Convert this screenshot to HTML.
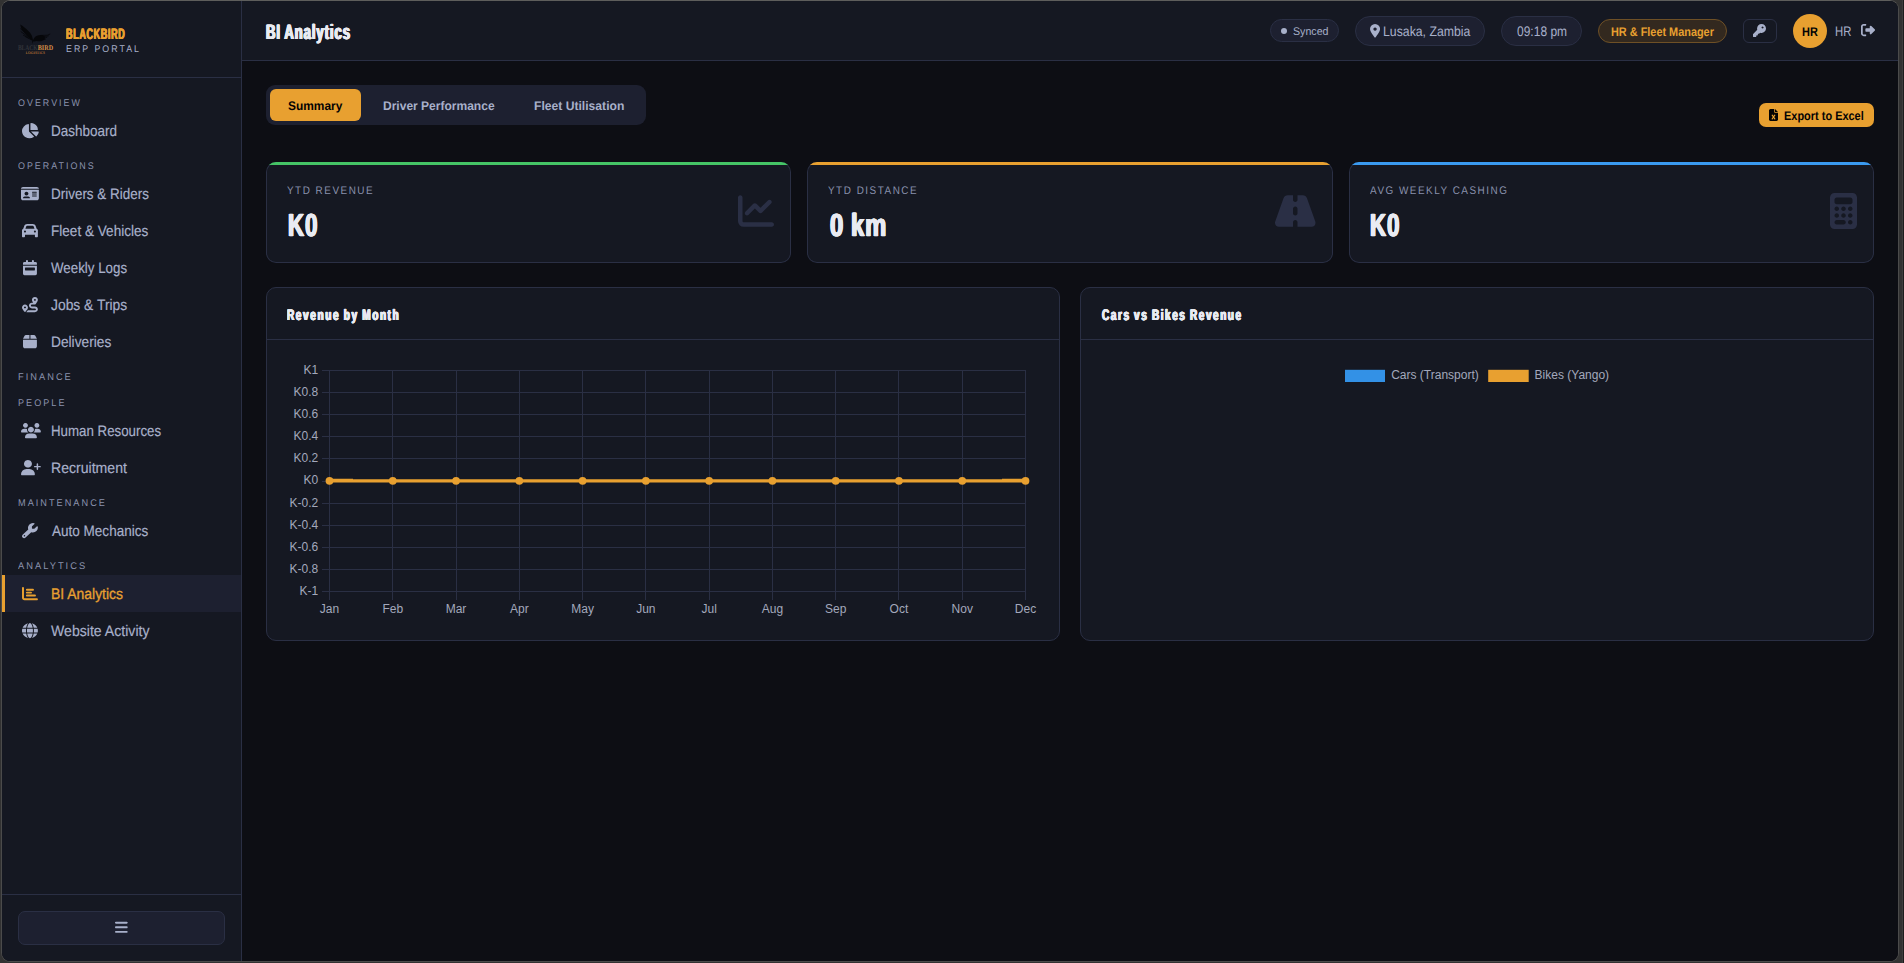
<!DOCTYPE html>
<html lang="en"><head><meta charset="utf-8"><title>Blackbird ERP Portal - BI Analytics</title>
<style>
*{margin:0;padding:0;box-sizing:border-box}
html,body{width:1904px;height:963px;overflow:hidden;background:#323232}
body{position:relative;font-family:"Liberation Sans", sans-serif;-webkit-font-smoothing:antialiased}
#edge{position:absolute;left:1902px;top:0;width:2px;height:963px;background:linear-gradient(90deg,#3d3d3d 50%,#1c1c1c 50%)}
#win{position:absolute;left:1px;top:0;width:1898px;height:962px;border:1px solid #4b4b4b;border-top-color:#5e5e5c;border-radius:9px;overflow:hidden;background:#0d0e14}
#win>*{position:absolute}
.sidebar{left:0;top:0;width:240px;height:960px;background:#151822;border-right:1px solid #2a2f44}
.brand{position:absolute;left:0;top:0;width:239px;height:77px;border-bottom:1px solid #2a2f44}
.topbar{left:240px;top:0;width:1656px;height:60px;background:#151822;border-bottom:1px solid #2a2f44}
main{left:240px;top:60px;width:1656px;height:900px;background:#0d0e14}
.sidebar *,.topbar *,main *{position:absolute}
.t{white-space:nowrap;line-height:1;transform-origin:0 0;display:block;text-rendering:geometricPrecision}
.cond{word-spacing:-1.2px}
.ic{display:block;overflow:visible}
.navact{background:#1d2030;border-left:3px solid #e8a030}
.sidefoot{height:1px;background:#2a2f44}
.collapse{background:#1d2030;border:1px solid #2a2f44;border-radius:7px}
.pill{background:#1d2030;border:1px solid #2a2f44;border-radius:16px}
.pill.role{background:#33291f;border-color:#6e5026}
.keybtn{border:1px solid #2a2f44;border-radius:6px}
.dot{width:6.6px;height:6.6px;border-radius:50%;background:#a8b0ca}
.avatar{width:34px;height:34px;border-radius:50%;background:#e8a030}
.tabs{background:#1d2030;border-radius:9px}
.tabon{background:#e8a030;border-radius:6px}
.export{background:#e8a030;border-radius:7px}
.kpi{background:#2a2f44;border-radius:10px;overflow:hidden}
.kpi>b{left:1px;top:1px;right:1px;bottom:1px;background:#151822;border-radius:9px}
.kpi>i{left:0;top:0;width:100%;height:3px}
.panel{background:#151822;border:1px solid #2a2f44;border-radius:10px}
.phead{left:0;top:0;width:100%;height:52px;border-bottom:1px solid #2a2f44}
.chart{display:block;overflow:visible}
</style></head>
<body>
<div id="edge"></div>
<div id="win">
<aside class="sidebar"><div class="brand"><svg class="logo" style="position:absolute;left:12px;top:19px" width="44" height="38" viewBox="14 20 44 38"><g fill="#06070a"><path d="M20.2 24.5 L22.3 25.8 L26.3 29.1 L30.1 32.7 L31.9 35.8 L32.9 39.4 L32.7 41.5 L30.9 39.6 L28.3 36.9 L25.3 33.8 L22.5 30.4 L21 27.4 Z"/><path d="M32.5 41.5 C33.4 38.8 34.8 36.9 36.4 36 C38.6 34.9 41.4 34.9 43.2 35.3 L45 37 L44.4 39.4 C42.6 41 39.4 41.7 36.8 41.1 L34.2 41.5 Z"/><path d="M32.1 41 L32.9 41 L32.6 43.5 L32.1 43.5 Z"/></g><g fill="none" stroke="#06070a" stroke-linecap="round"><path d="M27.4 36.4 L21 31.7 M29.2 38.2 L23.4 35.3 M30.8 39.5 L25.6 36.8" stroke-width="1" opacity=".85"/><path d="M25 32.6 L20.9 28.6" stroke-width="1.1" opacity=".8"/><path d="M41 35.4 L47.4 35.2 L49.9 34.1 M43.5 36.6 L48.4 35.9 M44 38.2 L46.8 37.4 M43.2 39.8 L45.4 39.2" stroke-width=".9" opacity=".85"/></g><g font-family='"Liberation Serif", serif' font-weight="700" text-rendering="geometricPrecision"><text x="17.9" y="50" font-size="7.1" fill="#33353a" textLength="19.8" lengthAdjust="spacingAndGlyphs">BLACK</text><text x="37.7" y="50" font-size="7.1" fill="#d88f48" textLength="15.4" lengthAdjust="spacingAndGlyphs">BIRD</text><text x="25.8" y="53.9" font-size="4" fill="#a86c34" textLength="19.2" lengthAdjust="spacingAndGlyphs">LOGISTICS</text></g></svg></div>
<svg class="ic" style="left:19.06px;top:121.70px;width:17.89px;height:15.2px;fill:#a8b0ca" viewBox="0 0 576 512" preserveAspectRatio="none"><path d="M304 240V17V240V17Q305 2 320 0Q383 1 433 31Q484 60 513 111Q543 161 544 224Q542 239 527 240H304ZM32 272Q34 179 92 114Q149 48 239 34Q254 34 256 50V288L413 445Q423 457 411 468Q351 511 272 512Q205 511 151 479Q97 447 65 393Q33 339 32 272ZM558 288Q574 290 574 305Q561 391 500 447Q489 456 479 447L320 288H558Z"/></svg>
<svg class="ic" style="left:19.06px;top:184.70px;width:17.89px;height:15.2px;fill:#a8b0ca" viewBox="0 0 576 512" preserveAspectRatio="none"><path d="M0 96H576H0H576Q575 69 557 51Q539 33 512 32H64Q37 33 19 51Q1 69 0 96ZM0 128V416V128V416Q1 443 19 461Q37 479 64 480H512Q539 479 557 461Q575 443 576 416V128H0ZM64 405Q65 383 80 368Q95 353 117 352H235Q257 353 272 368Q287 383 288 405Q287 415 277 416H75Q65 415 64 405ZM176 192Q212 193 231 224Q249 256 231 288Q212 319 176 320Q140 319 121 288Q103 256 121 224Q140 193 176 192ZM352 208Q353 193 368 192H496Q511 193 512 208Q511 223 496 224H368Q353 223 352 208ZM352 272Q353 257 368 256H496Q511 257 512 272Q511 287 496 288H368Q353 287 352 272ZM352 336Q353 321 368 320H496Q511 321 512 336Q511 351 496 352H368Q353 351 352 336Z"/></svg>
<svg class="ic" style="left:20.05px;top:221.70px;width:15.90px;height:15.2px;fill:#a8b0ca" viewBox="0 0 512 512" preserveAspectRatio="none"><path d="M135 117 109 192 135 117 109 192H403L377 117Q369 97 347 96H165Q143 97 135 117ZM40 197 75 96 40 197 75 96Q85 67 110 50Q134 32 165 32H347Q378 32 402 50Q427 67 437 96L472 197Q490 204 501 220Q512 236 512 256V400V448Q512 462 503 471Q494 480 480 480H448Q434 480 425 471Q416 462 416 448V400H96V448Q96 462 87 471Q78 480 64 480H32Q18 480 9 471Q0 462 0 448V400V256Q0 236 11 220Q22 204 40 197ZM128 288Q128 274 119 265Q110 256 96 256Q82 256 73 265Q64 274 64 288Q64 302 73 311Q82 320 96 320Q110 320 119 311Q128 302 128 288ZM416 320Q430 320 439 311Q448 302 448 288Q448 274 439 265Q430 256 416 256Q402 256 393 265Q384 274 384 288Q384 302 393 311Q402 320 416 320Z"/></svg>
<svg class="ic" style="left:21.04px;top:258.70px;width:13.91px;height:15.2px;fill:#a8b0ca" viewBox="0 0 448 512" preserveAspectRatio="none"><path d="M128 0Q142 0 151 9Q160 18 160 32V64H288V32Q288 18 297 9Q306 0 320 0Q334 0 343 9Q352 18 352 32V64H400Q420 65 434 78Q447 92 448 112V160H0V112Q1 92 14 78Q28 65 48 64H96V32Q96 18 105 9Q114 0 128 0ZM0 192H448H0H448V464Q447 484 434 498Q420 511 400 512H48Q28 511 14 498Q1 484 0 464V192ZM80 256Q65 257 64 272V336Q65 351 80 352H368Q383 351 384 336V272Q383 257 368 256H80Z"/></svg>
<svg class="ic" style="left:20.05px;top:295.70px;width:15.90px;height:15.2px;fill:#a8b0ca" viewBox="0 0 512 512" preserveAspectRatio="none"><path d="M512 96Q511 122 496 152Q480 182 461 209Q441 235 427 251Q421 258 413 256H320Q306 256 297 265Q288 274 288 288Q288 302 297 311Q306 320 320 320H416Q457 321 484 348Q511 375 512 416Q511 457 484 484Q457 511 416 512H140Q153 497 170 475Q179 463 189 448H416Q430 448 439 439Q448 430 448 416Q448 402 439 393Q430 384 416 384H320Q279 383 252 356Q225 329 224 288Q225 247 252 220Q279 193 320 192H360Q344 168 332 143Q321 118 320 96Q321 55 348 28Q375 1 416 0Q457 1 484 28Q511 55 512 96ZM117 489Q111 496 107 500L105 502Q95 509 85 500Q72 486 52 461Q32 436 16 407Q1 378 0 352Q1 311 28 284Q55 257 96 256Q137 257 164 284Q191 311 192 352Q191 375 179 401Q166 426 149 450Q132 472 118 488L117 489ZM128 352Q128 338 119 329Q110 320 96 320Q82 320 73 329Q64 338 64 352Q64 366 73 375Q82 384 96 384Q110 384 119 375Q128 366 128 352ZM416 128Q430 128 439 119Q448 110 448 96Q448 82 439 73Q430 64 416 64Q402 64 393 73Q384 82 384 96Q384 110 393 119Q402 128 416 128Z"/></svg>
<svg class="ic" style="left:21.04px;top:332.70px;width:13.91px;height:15.2px;fill:#a8b0ca" viewBox="0 0 448 512" preserveAspectRatio="none"><path d="M51 59 0 160 51 59 0 160H208V32H94Q65 33 51 59ZM240 160H448H240H448L397 59Q383 33 354 32H240V160ZM448 192H0H448H0V416Q1 443 19 461Q37 479 64 480H384Q411 479 429 461Q447 443 448 416V192Z"/></svg>
<svg class="ic" style="left:18.66px;top:421.70px;width:19.88px;height:15.2px;fill:#a8b0ca" viewBox="0 0 640 512" preserveAspectRatio="none"><path d="M144 0Q189 1 213 40Q235 80 213 120Q189 159 144 160Q99 159 75 120Q53 80 75 40Q99 1 144 0ZM512 0Q557 1 581 40Q603 80 581 120Q557 159 512 160Q467 159 443 120Q421 80 443 40Q467 1 512 0ZM0 299Q1 253 31 223Q61 193 107 192H149Q173 192 194 202Q192 213 192 224Q194 283 235 320Q235 320 235 320Q235 320 235 320H21Q2 318 0 299ZM405 320Q405 320 405 320Q405 320 405 320Q446 283 448 224Q448 213 446 202Q467 192 491 192H533Q579 193 609 223Q639 253 640 299Q638 318 619 320H405ZM224 224Q224 198 237 176Q250 154 272 141Q295 128 320 128Q345 128 368 141Q390 154 403 176Q416 198 416 224Q416 250 403 272Q390 294 368 307Q345 320 320 320Q295 320 272 307Q250 294 237 272Q224 250 224 224ZM128 485Q129 429 167 391Q205 353 261 352H379Q435 353 473 391Q511 429 512 485Q510 510 485 512H155Q130 510 128 485Z"/></svg>
<svg class="ic" style="left:18.66px;top:458.70px;width:19.88px;height:15.2px;fill:#a8b0ca" viewBox="0 0 640 512" preserveAspectRatio="none"><path d="M96 128Q96 93 113 64Q130 35 160 17Q190 0 224 0Q258 0 288 17Q318 35 335 64Q352 93 352 128Q352 163 335 192Q318 221 288 239Q258 256 224 256Q190 256 160 239Q130 221 113 192Q96 163 96 128ZM0 482Q2 407 52 356Q103 306 178 304H270Q345 306 396 356Q446 407 448 482Q448 495 439 503Q431 512 418 512H30Q17 512 9 503Q0 495 0 482ZM504 312V248V312V248H440Q418 246 416 224Q418 202 440 200H504V136Q506 114 528 112Q550 114 552 136V200H616Q638 202 640 224Q638 246 616 248H552V312Q550 334 528 336Q506 334 504 312Z"/></svg>
<svg class="ic" style="left:20.05px;top:521.70px;width:15.90px;height:15.2px;fill:#a8b0ca" viewBox="0 0 512 512" preserveAspectRatio="none"><path d="M352 320Q420 318 465 273Q510 228 512 160Q512 137 506 116Q503 108 495 106Q488 105 482 111L405 187Q400 192 393 192H336Q321 191 320 176V119Q320 112 325 107L402 30Q407 24 406 17Q404 9 396 6Q375 0 352 0Q284 2 239 47Q194 92 192 160Q192 189 202 215L20 396Q0 416 0 444Q1 473 20 492Q39 511 68 512Q96 512 116 492L298 311Q323 320 352 320ZM80 408Q102 410 104 432Q102 454 80 456Q58 454 56 432Q58 410 80 408Z"/></svg>
<div class="navact" style="left:0;top:574.0px;width:239px;height:37px"></div>
<svg class="ic" style="left:20.05px;top:584.70px;width:15.90px;height:15.2px;fill:#e8a030" viewBox="0 0 512 512" preserveAspectRatio="none"><path d="M32 32Q46 32 55 41Q64 50 64 64V400Q65 415 80 416H480Q494 416 503 425Q512 434 512 448Q512 462 503 471Q494 480 480 480H80Q46 479 23 457Q1 434 0 400V64Q0 50 9 41Q18 32 32 32ZM128 128Q128 114 137 105Q146 96 160 96H352Q366 96 375 105Q384 114 384 128Q384 142 375 151Q366 160 352 160H160Q146 160 137 151Q128 142 128 128ZM160 192H288H160H288Q302 192 311 201Q320 210 320 224Q320 238 311 247Q302 256 288 256H160Q146 256 137 247Q128 238 128 224Q128 210 137 201Q146 192 160 192ZM160 288H416H160H416Q430 288 439 297Q448 306 448 320Q448 334 439 343Q430 352 416 352H160Q146 352 137 343Q128 334 128 320Q128 306 137 297Q146 288 160 288Z"/></svg>
<svg class="ic" style="left:20.05px;top:621.70px;width:15.90px;height:15.2px;fill:#a8b0ca" viewBox="0 0 512 512" preserveAspectRatio="none"><path d="M352 256Q352 289 349 320H163Q160 289 160 256Q160 223 163 192H349Q352 223 352 256ZM381 192H504H381H504Q512 223 512 256Q512 289 504 320H381Q384 289 384 256Q384 223 381 192ZM493 160H377H493H377Q361 62 321 8Q381 25 426 64Q470 104 493 160ZM344 160H168H344H168Q177 105 195 65Q211 30 228 14Q245 -1 256 0Q267 -1 284 14Q301 30 317 65Q335 105 344 160ZM135 160H19H135H19Q42 104 86 64Q131 25 191 8Q151 62 135 160ZM8 192H131H8H131Q128 223 128 256Q128 289 131 320H8Q0 289 0 256Q0 223 8 192ZM195 447Q177 407 168 352H344Q335 407 317 447Q301 482 284 498Q267 513 256 512Q245 513 228 498Q211 482 195 447ZM135 352Q151 450 191 504Q131 487 86 448Q42 408 19 352H135ZM493 352Q470 408 426 448Q381 487 322 504Q361 450 377 352H493Z"/></svg>
<div class="sidefoot" style="left:0;top:893px;width:239px"></div>
<div class="collapse" style="left:16px;top:910px;width:207px;height:34px"></div>
<svg class="ic" style="left:113.46px;top:919.35px;width:12.69px;height:14.5px;fill:#a8b0ca" viewBox="0 0 448 512"><path d="M0 96Q0 82 9 73Q18 64 32 64H416Q430 64 439 73Q448 82 448 96Q448 110 439 119Q430 128 416 128H32Q18 128 9 119Q0 110 0 96ZM0 256Q0 242 9 233Q18 224 32 224H416Q430 224 439 233Q448 242 448 256Q448 270 439 279Q430 288 416 288H32Q18 288 9 279Q0 270 0 256ZM448 416Q448 430 439 439Q430 448 416 448H32Q18 448 9 439Q0 430 0 416Q0 402 9 393Q18 384 32 384H416Q430 384 439 393Q448 402 448 416Z"/></svg>
<span class="t cond" style="left:64.40px;top:26.00px;font-size:15.28px;font-weight:700;color:#e8a030;transform:scaleX(0.5932);letter-spacing:1.03px;-webkit-text-stroke:0.2px #e8a030;text-shadow:0.67px 0 0 #e8a030,-0.67px 0 0 #e8a030">BLACKBIRD</span>
<span class="t " style="left:64.13px;top:44.00px;font-size:9.69px;font-weight:400;color:#a8b0ca;transform:scaleX(0.9103);letter-spacing:2.22px">ERP PORTAL</span>
<span class="t lbl" style="left:16.13px;top:98.00px;font-size:9.69px;font-weight:400;color:#8a92ad;transform:scaleX(0.9184);letter-spacing:2.21px">OVERVIEW</span>
<span class="t lbl" style="left:16.13px;top:161.00px;font-size:9.69px;font-weight:400;color:#8a92ad;transform:scaleX(0.9204);letter-spacing:2.17px">OPERATIONS</span>
<span class="t lbl" style="left:15.98px;top:372.00px;font-size:9.69px;font-weight:400;color:#8a92ad;transform:scaleX(0.9550);letter-spacing:2.13px">FINANCE</span>
<span class="t lbl" style="left:16.00px;top:398.00px;font-size:9.69px;font-weight:400;color:#8a92ad;transform:scaleX(0.9374);letter-spacing:2.17px">PEOPLE</span>
<span class="t lbl" style="left:15.98px;top:498.00px;font-size:9.69px;font-weight:400;color:#8a92ad;transform:scaleX(0.9463);letter-spacing:2.14px">MAINTENANCE</span>
<span class="t lbl" style="left:16.07px;top:561.00px;font-size:9.69px;font-weight:400;color:#8a92ad;transform:scaleX(0.9649);letter-spacing:2.07px">ANALYTICS</span>
<span class="t nav" style="left:48.92px;top:123.00px;font-size:15.28px;font-weight:400;color:#a8b0ca;transform:scaleX(0.8837);-webkit-text-stroke:0.18px #a8b0ca">Dashboard</span>
<span class="t nav" style="left:48.94px;top:186.00px;font-size:15.28px;font-weight:400;color:#a8b0ca;transform:scaleX(0.8809);-webkit-text-stroke:0.18px #a8b0ca">Drivers &amp; Riders</span>
<span class="t nav" style="left:48.92px;top:223.00px;font-size:15.28px;font-weight:400;color:#a8b0ca;transform:scaleX(0.8892);-webkit-text-stroke:0.18px #a8b0ca">Fleet &amp; Vehicles</span>
<span class="t nav" style="left:49.29px;top:260.00px;font-size:15.28px;font-weight:400;color:#a8b0ca;transform:scaleX(0.8731);-webkit-text-stroke:0.18px #a8b0ca">Weekly Logs</span>
<span class="t nav" style="left:49.23px;top:297.00px;font-size:15.28px;font-weight:400;color:#a8b0ca;transform:scaleX(0.9075);-webkit-text-stroke:0.18px #a8b0ca">Jobs &amp; Trips</span>
<span class="t nav" style="left:48.92px;top:334.00px;font-size:15.28px;font-weight:400;color:#a8b0ca;transform:scaleX(0.8997);-webkit-text-stroke:0.18px #a8b0ca">Deliveries</span>
<span class="t nav" style="left:48.94px;top:423.00px;font-size:15.28px;font-weight:400;color:#a8b0ca;transform:scaleX(0.8708);-webkit-text-stroke:0.18px #a8b0ca">Human Resources</span>
<span class="t nav" style="left:48.89px;top:460.00px;font-size:15.28px;font-weight:400;color:#a8b0ca;transform:scaleX(0.9224);-webkit-text-stroke:0.18px #a8b0ca">Recruitment</span>
<span class="t nav" style="left:49.86px;top:523.00px;font-size:15.28px;font-weight:400;color:#a8b0ca;transform:scaleX(0.8860);-webkit-text-stroke:0.18px #a8b0ca">Auto Mechanics</span>
<span class="t nav" style="left:49.00px;top:586.00px;font-size:15.28px;font-weight:400;color:#e8a030;transform:scaleX(0.9124);-webkit-text-stroke:0.32px #e8a030">BI Analytics</span>
<span class="t nav" style="left:49.26px;top:623.00px;font-size:15.28px;font-weight:400;color:#a8b0ca;transform:scaleX(0.9242);-webkit-text-stroke:0.18px #a8b0ca">Website Activity</span>
</aside>
<header class="topbar">
<div class="pill" style="left:1028px;top:18px;width:69px;height:23px"></div>
<div class="dot" style="left:1038.7px;top:26.6px"></div>
<div class="pill" style="left:1113px;top:15px;width:130px;height:30px"></div>
<svg class="ic" style="left:1128.04px;top:23.25px;width:10.12px;height:13.5px;fill:#a8b0ca" viewBox="0 0 384 512"><path d="M216 499Q243 466 282 410Q321 355 352 296Q382 237 384 192Q382 110 328 56Q274 2 192 0Q110 2 56 56Q2 110 0 192Q2 237 32 296Q63 355 102 410Q141 466 168 499Q178 511 192 511Q206 511 216 499ZM192 128Q228 129 247 160Q265 192 247 224Q228 255 192 256Q156 255 137 224Q119 192 137 160Q156 129 192 128Z"/></svg>
<div class="pill" style="left:1259px;top:15px;width:81px;height:30px"></div>
<div class="pill role" style="left:1356px;top:18px;width:129px;height:24px"></div>
<div class="keybtn" style="left:1501px;top:18px;width:34px;height:24px"></div>
<svg class="ic" style="left:1511.10px;top:23.20px;width:13.00px;height:13px;fill:#a8b0ca" viewBox="0 0 512 512"><path d="M336 352Q411 350 460 300Q510 251 512 176Q510 101 460 52Q411 2 336 0Q261 2 212 52Q162 101 160 176Q160 204 168 230L7 391Q0 398 0 408V488Q2 510 24 512H104Q126 510 128 488V448H168Q190 446 192 424V384H232Q242 384 249 377L282 344Q308 352 336 352ZM376 96Q399 97 411 116Q421 136 411 156Q399 175 376 176Q353 175 341 156Q331 136 341 116Q353 97 376 96Z"/></svg>
<div class="avatar" style="left:1551px;top:13px"></div>
<svg class="ic" style="left:1618.50px;top:22.40px;width:14.00px;height:14px;fill:#a8b0ca" viewBox="0 0 512 512"><path d="M378 106 501 229 378 106 501 229Q512 240 512 256Q512 272 501 283L378 406Q368 416 354 416Q340 416 330 406Q320 396 320 382V320H192Q178 320 169 311Q160 302 160 288V224Q160 210 169 201Q178 192 192 192H320V130Q320 116 330 106Q340 96 354 96Q368 96 378 106ZM160 96H96H160H96Q82 96 73 105Q64 114 64 128V384Q64 398 73 407Q82 416 96 416H160Q174 416 183 425Q192 434 192 448Q192 462 183 471Q174 480 160 480H96Q55 479 28 452Q1 425 0 384V128Q1 87 28 60Q55 33 96 32H160Q174 32 183 41Q192 50 192 64Q192 78 183 87Q174 96 160 96Z"/></svg>
<span class="t cond" style="left:24.43px;top:22.00px;font-size:20.87px;font-weight:700;color:#e9ebf2;transform:scaleX(0.6262);letter-spacing:1.52px;-webkit-text-stroke:0.2px #e9ebf2;text-shadow:0.52px 0 0 #e9ebf2,-0.52px 0 0 #e9ebf2,1.04px 0 0 #e9ebf2,-1.04px 0 0 #e9ebf2">BI Analytics</span>
<span class="t " style="left:1051.28px;top:26.00px;font-size:11.09px;font-weight:400;color:#a8b0ca;transform:scaleX(0.9611)">Synced</span>
<span class="t " style="left:1140.70px;top:24.00px;font-size:13.88px;font-weight:400;color:#a8b0ca;transform:scaleX(0.8856)">Lusaka, Zambia</span>
<span class="t " style="left:1274.84px;top:24.00px;font-size:13.88px;font-weight:400;color:#a8b0ca;transform:scaleX(0.8657)">09:18 pm</span>
<span class="t " style="left:1368.89px;top:25.00px;font-size:12.49px;font-weight:700;color:#e8a030;transform:scaleX(0.8724)">HR &amp; Fleet Manager</span>
<span class="t " style="left:1559.79px;top:25.00px;font-size:12.49px;font-weight:700;color:#030304;transform:scaleX(0.8773)">HR</span>
<span class="t " style="left:1592.87px;top:24.00px;font-size:13.88px;font-weight:400;color:#a8b0ca;transform:scaleX(0.8155)">HR</span>
</header>
<main>
<div class="tabs" style="left:24.00px;top:24.00px;width:380.00px;height:40.00px"></div>
<div class="tabon" style="left:28.00px;top:28.00px;width:91.00px;height:32.00px"></div>
<div class="export" style="left:1517.00px;top:42.00px;width:115.00px;height:24.00px"></div>
<svg class="ic" style="left:1526.80px;top:47.60px;width:9.00px;height:12px;fill:#030304" viewBox="0 0 384 512"><path d="M64 0Q37 1 19 19Q1 37 0 64V448Q1 475 19 493Q37 511 64 512H320Q347 511 365 493Q383 475 384 448V160H256Q242 160 233 151Q224 142 224 128V0H64ZM256 0V128V0V128H384L256 0ZM156 250 192 302 156 250 192 302 228 250Q243 233 262 244Q278 259 268 278L221 344L268 410Q279 429 262 444Q243 455 228 438L192 386L156 438Q141 455 122 444Q106 429 116 410L163 344L116 278Q105 259 122 244Q141 233 156 250Z"/></svg>
<div class="kpi" style="left:24.00px;top:101.00px;width:525.33px;height:101.00px"><b></b><i style="background:#45c466"></i></div>
<svg class="ic" style="left:496.33px;top:132.30px;width:36.00px;height:36px;fill:#2a2f45" viewBox="0 0 512 512"><path d="M64 64Q64 50 55 41Q46 32 32 32Q18 32 9 41Q0 50 0 64V400Q1 434 23 457Q46 479 80 480H480Q494 480 503 471Q512 462 512 448Q512 434 503 425Q494 416 480 416H80Q65 415 64 400V64ZM471 151Q480 141 480 128Q480 115 471 105Q461 96 448 96Q435 96 425 105L320 211L263 153Q253 144 240 144Q227 144 217 153L105 265Q96 275 96 288Q96 301 105 311Q115 320 128 320Q141 320 151 311L240 221L297 279Q307 288 320 288Q333 288 343 279L471 151Z"/></svg>
<div class="kpi" style="left:565.33px;top:101.00px;width:525.33px;height:101.00px"><b></b><i style="background:#e8a030"></i></div>
<svg class="ic" style="left:1033.17px;top:132.30px;width:40.50px;height:36px;fill:#2a2f45" viewBox="0 0 576 512"><path d="M256 32H181H256H181Q160 32 144 44Q128 55 121 75L3 407Q0 416 0 425Q1 449 16 464Q31 479 55 480H256V416Q256 402 265 393Q274 384 288 384Q302 384 311 393Q320 402 320 416V480H521Q545 479 560 464Q575 449 576 425Q576 416 573 407L455 75Q448 55 432 44Q416 32 395 32H320V96Q320 110 311 119Q302 128 288 128Q274 128 265 119Q256 110 256 96V32ZM320 224V288V224V288Q320 302 311 311Q302 320 288 320Q274 320 265 311Q256 302 256 288V224Q256 210 265 201Q274 192 288 192Q302 192 311 201Q320 210 320 224Z"/></svg>
<div class="kpi" style="left:1106.67px;top:101.00px;width:525.33px;height:101.00px"><b></b><i style="background:#3a9af0"></i></div>
<svg class="ic" style="left:1588.00px;top:132.30px;width:27.00px;height:36px;fill:#2a2f45" viewBox="0 0 384 512"><path d="M64 0Q37 1 19 19Q1 37 0 64V448Q1 475 19 493Q37 511 64 512H320Q347 511 365 493Q383 475 384 448V64Q383 37 365 19Q347 1 320 0H64ZM96 64H288H96H288Q302 64 311 73Q320 82 320 96V128Q320 142 311 151Q302 160 288 160H96Q82 160 73 151Q64 142 64 128V96Q64 82 73 73Q82 64 96 64ZM128 224Q128 238 119 247Q110 256 96 256Q82 256 73 247Q64 238 64 224Q64 210 73 201Q82 192 96 192Q110 192 119 201Q128 210 128 224ZM96 352Q82 352 73 343Q64 334 64 320Q64 306 73 297Q82 288 96 288Q110 288 119 297Q128 306 128 320Q128 334 119 343Q110 352 96 352ZM64 416Q64 402 73 393Q82 384 96 384H192Q206 384 215 393Q224 402 224 416Q224 430 215 439Q206 448 192 448H96Q82 448 73 439Q64 430 64 416ZM192 256Q178 256 169 247Q160 238 160 224Q160 210 169 201Q178 192 192 192Q206 192 215 201Q224 210 224 224Q224 238 215 247Q206 256 192 256ZM224 320Q224 334 215 343Q206 352 192 352Q178 352 169 343Q160 334 160 320Q160 306 169 297Q178 288 192 288Q206 288 215 297Q224 306 224 320ZM288 256Q274 256 265 247Q256 238 256 224Q256 210 265 201Q274 192 288 192Q302 192 311 201Q320 210 320 224Q320 238 311 247Q302 256 288 256ZM320 320Q320 334 311 343Q302 352 288 352Q274 352 265 343Q256 334 256 320Q256 306 265 297Q274 288 288 288Q302 288 311 297Q320 306 320 320ZM288 448Q274 448 265 439Q256 430 256 416Q256 402 265 393Q274 384 288 384Q302 384 311 393Q320 402 320 416Q320 430 311 439Q302 448 288 448Z"/></svg>
<div class="panel" style="left:24.00px;top:226.00px;width:794.00px;height:354.00px"><div class="phead"></div></div>
<div class="panel" style="left:838.00px;top:226.00px;width:794.00px;height:354.00px"><div class="phead"></div></div>
<svg class="chart" style="left:38px;top:291px" width="770" height="280" viewBox="0 0 770 280"><g stroke="#2a2f44" stroke-width="1" shape-rendering="crispEdges"><line x1="42" y1="18.50" x2="745.5" y2="18.50"/><line x1="42" y1="40.60" x2="745.5" y2="40.60"/><line x1="42" y1="62.70" x2="745.5" y2="62.70"/><line x1="42" y1="84.80" x2="745.5" y2="84.80"/><line x1="42" y1="106.90" x2="745.5" y2="106.90"/><line x1="42" y1="129.00" x2="745.5" y2="129.00"/><line x1="42" y1="151.10" x2="745.5" y2="151.10"/><line x1="42" y1="173.20" x2="745.5" y2="173.20"/><line x1="42" y1="195.30" x2="745.5" y2="195.30"/><line x1="42" y1="217.40" x2="745.5" y2="217.40"/><line x1="42" y1="239.50" x2="745.5" y2="239.50"/><line x1="49.50" y1="18.5" x2="49.50" y2="247.5"/><line x1="112.77" y1="18.5" x2="112.77" y2="247.5"/><line x1="176.05" y1="18.5" x2="176.05" y2="247.5"/><line x1="239.32" y1="18.5" x2="239.32" y2="247.5"/><line x1="302.59" y1="18.5" x2="302.59" y2="247.5"/><line x1="365.86" y1="18.5" x2="365.86" y2="247.5"/><line x1="429.14" y1="18.5" x2="429.14" y2="247.5"/><line x1="492.41" y1="18.5" x2="492.41" y2="247.5"/><line x1="555.68" y1="18.5" x2="555.68" y2="247.5"/><line x1="618.95" y1="18.5" x2="618.95" y2="247.5"/><line x1="682.23" y1="18.5" x2="682.23" y2="247.5"/><line x1="745.50" y1="18.5" x2="745.50" y2="247.5"/></g><line x1="49.5" y1="128.80" x2="745.5" y2="128.80" stroke="#e8a030" stroke-width="3.2"/><path d="M49.5 128.35H73M722 128.35H745.5" stroke="#e8a030" stroke-width="3.2" fill="none"/><g fill="#e8a030"><circle cx="49.50" cy="128.80" r="3.9"/><circle cx="112.77" cy="128.80" r="3.9"/><circle cx="176.05" cy="128.80" r="3.9"/><circle cx="239.32" cy="128.80" r="3.9"/><circle cx="302.59" cy="128.80" r="3.9"/><circle cx="365.86" cy="128.80" r="3.9"/><circle cx="429.14" cy="128.80" r="3.9"/><circle cx="492.41" cy="128.80" r="3.9"/><circle cx="555.68" cy="128.80" r="3.9"/><circle cx="618.95" cy="128.80" r="3.9"/><circle cx="682.23" cy="128.80" r="3.9"/><circle cx="745.50" cy="128.80" r="3.9"/></g><g fill="#a3a8bc" font-family='"Liberation Sans", sans-serif' font-size="12"><text x="38.30000000000001" y="22.00" text-anchor="end">K1</text><text x="38.30000000000001" y="44.00" text-anchor="end">K0.8</text><text x="38.30000000000001" y="66.00" text-anchor="end">K0.6</text><text x="38.30000000000001" y="88.00" text-anchor="end">K0.4</text><text x="38.30000000000001" y="110.00" text-anchor="end">K0.2</text><text x="38.30000000000001" y="132.00" text-anchor="end">K0</text><text x="38.30000000000001" y="155.00" text-anchor="end">K-0.2</text><text x="38.30000000000001" y="177.00" text-anchor="end">K-0.4</text><text x="38.30000000000001" y="199.00" text-anchor="end">K-0.6</text><text x="38.30000000000001" y="221.00" text-anchor="end">K-0.8</text><text x="38.30000000000001" y="243.00" text-anchor="end">K-1</text><text x="49.50" y="261" text-anchor="middle">Jan</text><text x="112.77" y="261" text-anchor="middle">Feb</text><text x="176.05" y="261" text-anchor="middle">Mar</text><text x="239.32" y="261" text-anchor="middle">Apr</text><text x="302.59" y="261" text-anchor="middle">May</text><text x="365.86" y="261" text-anchor="middle">Jun</text><text x="429.14" y="261" text-anchor="middle">Jul</text><text x="492.41" y="261" text-anchor="middle">Aug</text><text x="555.68" y="261" text-anchor="middle">Sep</text><text x="618.95" y="261" text-anchor="middle">Oct</text><text x="682.23" y="261" text-anchor="middle">Nov</text><text x="745.50" y="261" text-anchor="middle">Dec</text></g></svg>
<svg class="chart" style="left:1094px;top:299px" width="290" height="30" viewBox="0 0 290 30"><rect x="9" y="9.8" width="40" height="12.2" fill="#3391e6"/><rect x="152.2" y="9.8" width="40.5" height="12.2" fill="#e8a030"/><g fill="#a3a8bc" font-family='"Liberation Sans", sans-serif' font-size="12"><text x="55.2" y="18.9">Cars (Transport)</text><text x="198.6" y="18.9">Bikes (Yango)</text></g></svg>
<span class="t " style="left:46.02px;top:39.00px;font-size:12.49px;font-weight:700;color:#030304;transform:scaleX(0.9554)">Summary</span>
<span class="t " style="left:140.52px;top:39.00px;font-size:12.49px;font-weight:700;color:#a8b0ca;transform:scaleX(0.9629)">Driver Performance</span>
<span class="t " style="left:292.12px;top:39.00px;font-size:12.49px;font-weight:700;color:#a8b0ca;transform:scaleX(0.9719)">Fleet Utilisation</span>
<span class="t " style="left:1541.79px;top:49.00px;font-size:12.49px;font-weight:700;color:#030304;transform:scaleX(0.8776)">Export to Excel</span>
<span class="t lbl" style="left:45.04px;top:125.00px;font-size:11.09px;font-weight:400;color:#8a92ad;transform:scaleX(0.8956);letter-spacing:1.68px">YTD REVENUE</span>
<span class="t cond" style="left:45.68px;top:148.00px;font-size:32.04px;font-weight:700;color:#e9ebf2;transform:scaleX(0.6939);letter-spacing:1.43px;-webkit-text-stroke:0.3px #e9ebf2;text-shadow:0.47px 0 0 #e9ebf2,-0.47px 0 0 #e9ebf2,0.94px 0 0 #e9ebf2,-0.94px 0 0 #e9ebf2">K0</span>
<span class="t lbl" style="left:586.39px;top:125.00px;font-size:11.09px;font-weight:400;color:#8a92ad;transform:scaleX(0.8959);letter-spacing:1.68px">YTD DISTANCE</span>
<span class="t cond" style="left:587.50px;top:148.00px;font-size:32.04px;font-weight:700;color:#e9ebf2;transform:scaleX(0.7418);letter-spacing:1.38px;-webkit-text-stroke:0.3px #e9ebf2;text-shadow:0.44px 0 0 #e9ebf2,-0.44px 0 0 #e9ebf2,0.88px 0 0 #e9ebf2,-0.88px 0 0 #e9ebf2">0 km</span>
<span class="t lbl" style="left:1127.92px;top:125.00px;font-size:11.09px;font-weight:400;color:#8a92ad;transform:scaleX(0.8965);letter-spacing:1.67px">AVG WEEKLY CASHING</span>
<span class="t cond" style="left:1128.35px;top:148.00px;font-size:32.04px;font-weight:700;color:#e9ebf2;transform:scaleX(0.6939);letter-spacing:1.43px;-webkit-text-stroke:0.3px #e9ebf2;text-shadow:0.47px 0 0 #e9ebf2,-0.47px 0 0 #e9ebf2,0.94px 0 0 #e9ebf2,-0.94px 0 0 #e9ebf2">K0</span>
<span class="t cond" style="left:45.10px;top:247.00px;font-size:15.28px;font-weight:700;color:#e9ebf2;transform:scaleX(0.6604);letter-spacing:2.39px;-webkit-text-stroke:0.2px #e9ebf2;text-shadow:0.38px 0 0 #e9ebf2,-0.38px 0 0 #e9ebf2,0.76px 0 0 #e9ebf2,-0.76px 0 0 #e9ebf2">Revenue by Month</span>
<span class="t cond" style="left:859.52px;top:247.00px;font-size:15.28px;font-weight:700;color:#e9ebf2;transform:scaleX(0.6547);letter-spacing:2.40px;-webkit-text-stroke:0.2px #e9ebf2;text-shadow:0.38px 0 0 #e9ebf2,-0.38px 0 0 #e9ebf2,0.76px 0 0 #e9ebf2,-0.76px 0 0 #e9ebf2">Cars vs Bikes Revenue</span>
</main>
</div>
</body></html>
